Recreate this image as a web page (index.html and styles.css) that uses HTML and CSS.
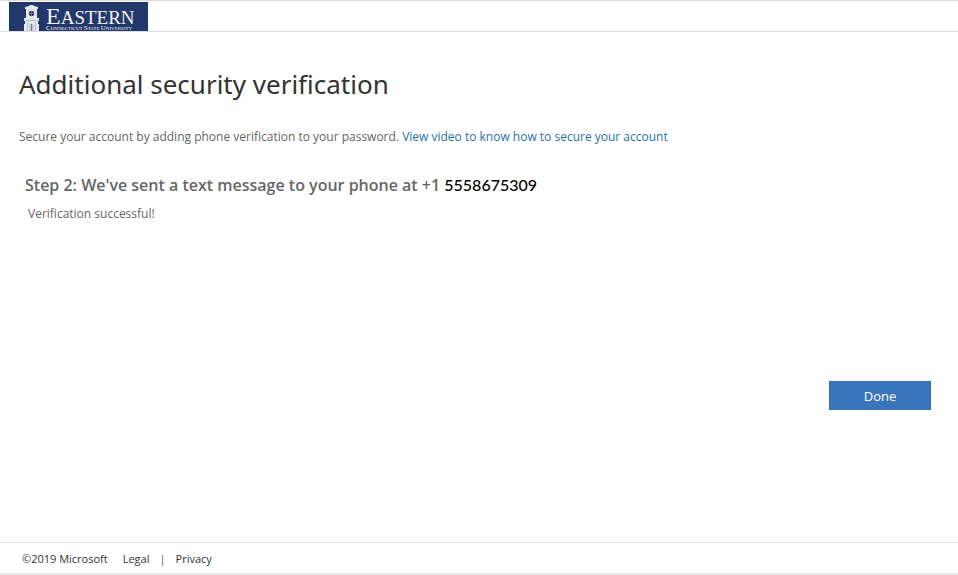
FILE: index.html
```html
<!DOCTYPE html>
<html lang="en">
<head>
<meta charset="utf-8">
<meta name="viewport" content="width=device-width, initial-scale=1">
<title>Additional security verification</title>
<link rel="stylesheet" href="styles.css">
</head>
<body>
<header class="banner">
  <svg class="logo" viewBox="0 0 139 29" role="img" aria-label="Eastern Connecticut State University">
    <rect width="139" height="29" fill="#22386a"/>
    <g fill="#e4e7ee">
      <path d="M20 4l1-1h3l1 1 4 1v2H16V5z"/>
      <path d="M17 7h11v9H17z"/>
      <path d="M15 16h15v3H15z"/>
      <path d="M16 19h13v3h1v7H15v-7h1z"/>
    </g>
    <circle cx="22.5" cy="11.500" r="2.700" fill="#22386a"/>
    <path d="M20 11.500h5M22.500 9v5" stroke="#8c98b4" stroke-width=".6"/>
    <path d="M20 29v-6q2.500-3 5 0v6" fill="#c2c8d6"/>
    <path d="M18.500 20v9M26.500 20v9M16 18.500h13" stroke="#a0aac1" stroke-width=".7"/>
    <path d="M22.500 22v7" stroke="#6d7b9e"/>
    <text class="logo-name" x="37" y="22"><tspan class="logo-initial">E</tspan>ASTERN</text>
    <text class="logo-sub" x="37" y="28"><tspan class="logo-sub-initial">C</tspan>ONNECTICUT <tspan class="logo-sub-initial">S</tspan>TATE <tspan class="logo-sub-initial">U</tspan>NIVERSITY</text>
  </svg>
</header>
<main class="content">
  <h1 class="title">Additional security verification</h1>
  <p class="intro">Secure your account by adding phone verification to your password. <a class="link" href="#">View video to know how to secure your account</a></p>
  <section class="step">
    <h2 class="step-title">Step 2: We've sent a text message to your phone at +1 <span class="phone">5558675309</span></h2>
    <p class="status">Verification successful!</p>
  </section>
  <div class="actions"><button class="done" type="button">Done</button></div>
</main>
<footer class="footer">
  <span class="copyright">©2019 Microsoft</span>
  <a href="#">Legal</a>
  <span class="divider">|</span>
  <a href="#">Privacy</a>
</footer>
</body>
</html>
```
FILE: styles.css
```css
* { box-sizing: border-box; }

body {
  display: flex;
  flex-direction: column;
  min-height: 100vh;
  margin: 0;
  background: #fff;
  color: #666;
  font-family: "Open Sans", "Noto Sans", sans-serif;
  font-size: 12px;
  line-height: 16px;
}

h1, h2, p { margin: 0; }

.banner {
  display: flex;
  padding: 1px 9px 0;
  border-top: 1px solid #ddd;
  border-bottom: 1px solid #ddd;
}

.logo { display: block; width: 139px; height: 29px; }

.logo text { fill: #f2f3f7; font-family: "Liberation Serif", serif; }
.logo .logo-name { font-size: 19px; }
.logo .logo-initial { font-size: 24px; }
.logo .logo-sub { font-size: 5px; }
.logo .logo-sub-initial { font-size: 7px; }

.content { flex: 1; padding: 32px 27px 0 19px; }

.title {
  color: #333;
  font-family: "Noto Sans", "Open Sans", sans-serif;
  font-size: 26px;
  font-weight: 400;
  line-height: 40px;
}

.intro { margin-top: 25px; }

.link { color: #2672a8; text-decoration: none; }

.step { margin-top: 28px; padding-left: 6px; }

.step-title {
  font-size: 16px;
  font-weight: 600;
  line-height: 24px;
}

.phone { color: #000; font-family: Lato, sans-serif; font-weight: 500; }

.status { margin-top: 9px; padding-left: 3px; }

.actions { display: flex; justify-content: flex-end; margin-top: 159px; }

.done {
  min-width: 102px;
  padding: 6px 16px 5px;
  border: 0;
  background: #3a75bc;
  color: #fff;
  font: inherit;
  font-size: 13px;
  line-height: 18px;
}

.footer {
  display: flex;
  align-items: center;
  gap: 10px;
  padding: 8px 22px 6px;
  border-top: 1px solid #ddd;
  border-bottom: 2px solid #eaeaea;
  color: #333;
  font-size: 11px;
}

.footer a { color: inherit; text-decoration: none; }
.copyright { margin-right: 5px; }
.divider { color: #844; }
```
